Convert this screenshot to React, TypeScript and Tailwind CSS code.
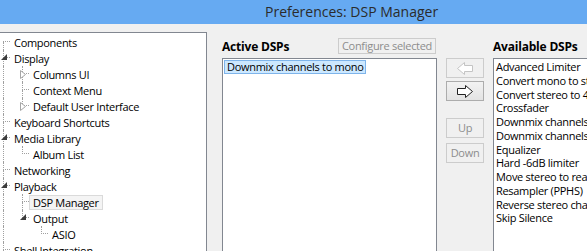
import type { ReactNode } from 'react'

type Node = {
  label: string
  children?: Node[]
  open?: boolean
  selected?: boolean
}

const TREE: Node[] = [
  { label: 'Components' },
  {
    label: 'Display',
    open: true,
    children: [
      { label: 'Columns UI', children: [], open: false },
      { label: 'Context Menu' },
      { label: 'Default User Interface', children: [], open: false },
    ],
  },
  { label: 'Keyboard Shortcuts' },
  { label: 'Media Library', open: true, children: [{ label: 'Album List' }] },
  { label: 'Networking' },
  {
    label: 'Playback',
    open: true,
    children: [
      { label: 'DSP Manager', selected: true },
      { label: 'Output', open: true, children: [{ label: 'ASIO' }] },
    ],
  },
  { label: 'Shell Integration' },
  { label: 'Tools' },
]

const AVAILABLE = [
  'Advanced Limiter',
  'Convert mono to stereo',
  'Convert stereo to 4 channels',
  'Crossfader',
  'Downmix channels to mono',
  'Downmix channels to stereo',
  'Equalizer',
  'Hard -6dB limiter',
  'Move stereo to rear channels',
  'Resampler (PPHS)',
  'Reverse stereo channels',
  'Skip Silence',
]

function Expander({ open }: { open: boolean }) {
  if (open) {
    return (
      <svg className="absolute left-[1px] top-[4px]" width="6" height="6" viewBox="0 0 6 6">
        <polygon points="6,0 6,6 0,6" fill="#3c3c3c" />
      </svg>
    )
  }
  return (
    <svg className="absolute left-[1px] top-[4px]" width="6" height="9" viewBox="0 0 6 9">
      <polygon points="0.5,0.5 5.5,4.5 0.5,8.5" fill="#fff" stroke="#a6a6a6" strokeWidth="1" />
    </svg>
  )
}

function TreeRow({ node, guides, isFirst, isLast }: { node: Node; guides: boolean[]; isFirst: boolean; isLast: boolean }) {
  return (
    <div className="flex h-[16px] items-center">
      {guides.map((g, i) => (
        <div key={i} className="h-full w-[19px] shrink-0">
          <div className={g ? 'ml-[3px] h-full border-l border-dotted border-[#a0a0a0]' : 'ml-[3px] h-full'} />
        </div>
      ))}
      <div className="relative flex h-full w-[10px] shrink-0 flex-col">
        <div
          className={
            isFirst
              ? 'ml-[3px] h-[8px] w-[7px] border-b border-dotted border-[#a0a0a0]'
              : 'ml-[3px] h-[8px] w-[7px] border-b border-l border-dotted border-[#a0a0a0]'
          }
        />
        <div className={isLast ? 'ml-[3px] h-[8px]' : 'ml-[3px] h-[8px] border-l border-dotted border-[#a0a0a0]'} />
        {node.children && <Expander open={!!node.open} />}
      </div>
      <span
        className={
          node.selected
            ? 'h-[15px] whitespace-nowrap border border-[#dadada] bg-[#f4f4f4] px-[3px] leading-[13px]'
            : 'h-[15px] whitespace-nowrap border border-transparent px-[3px] leading-[13px]'
        }
      >
        {node.label}
      </span>
    </div>
  )
}

function renderTree(nodes: Node[], guides: boolean[], root: boolean): ReactNode[] {
  const rows: ReactNode[] = []
  nodes.forEach((node, i) => {
    const isLast = i === nodes.length - 1
    rows.push(
      <TreeRow key={guides.length + node.label} node={node} guides={guides} isFirst={root && i === 0} isLast={isLast} />
    )
    if (node.children && node.open) {
      rows.push(...renderTree(node.children, [...guides, !isLast], false))
    }
  })
  return rows
}

function Button({ children, disabled, className }: { children: ReactNode; disabled?: boolean; className: string }) {
  return (
    <div
      className={
        disabled
          ? `flex items-center justify-center whitespace-nowrap border border-[#cccccc] bg-[#f0f0f0] text-[#8d8d8d] ${className}`
          : `flex items-center justify-center whitespace-nowrap border border-[#acacac] bg-[linear-gradient(#f2f2f2,#e3e3e3)] text-black ${className}`
      }
    >
      {children}
    </div>
  )
}

function Arrow({ dir, color }: { dir: 'left' | 'right'; color: string }) {
  const pts = dir === 'right' ? '0.5,3.5 8.5,3.5 8.5,0.5 15.5,6.5 8.5,12.5 8.5,9.5 0.5,9.5' : '15.5,3.5 7.5,3.5 7.5,0.5 0.5,6.5 7.5,12.5 7.5,9.5 15.5,9.5'
  return (
    <svg width="16" height="13" viewBox="0 0 16 13">
      <polygon points={pts} fill="#fff" stroke={color} strokeWidth="1" />
    </svg>
  )
}

export default function App() {
  return (
    <div className="flex h-[251px] w-[587px] flex-col overflow-hidden bg-[#f0f0f0] font-['Open_Sans',sans-serif] text-[11px] tracking-[-0.3px] text-black">
      <div className="h-[24px] shrink-0 bg-[#66aaf2] pl-[265px] text-[14px] leading-[24px] tracking-normal text-[#2b2b2b]">
        Preferences: DSP Manager
      </div>

      <div className="flex min-h-0 flex-1">
        <div className="mt-[8px] w-[207px] shrink-0 border-r border-t border-[#828790] bg-white pt-[1px]">
          {renderTree(TREE, [], true)}
        </div>

        <div className="ml-[15px] flex w-[215px] shrink-0 flex-col">
          <div className="flex h-[34px] shrink-0 items-start justify-between">
            <span className="mt-[15px] text-[12px] font-bold leading-[16px] tracking-[-0.2px]">Active DSPs</span>
            <Button disabled className="mr-[1px] mt-[14px] h-[16px] w-[98px] leading-[14px]">
              Configure selected
            </Button>
          </div>
          <div className="flex-1 border border-b-0 border-[#828790] bg-white p-[1px]">
            <div className="h-[14px] w-[142px] whitespace-nowrap border border-[#7eb4ea] bg-[#cce8ff] px-[2px] leading-[12px]">
              Downmix channels to mono
            </div>
          </div>
        </div>

        <div className="ml-[9px] flex w-[38px] shrink-0 flex-col pt-[34px]">
          <Button disabled className="h-[20px] w-[38px]">
            <Arrow dir="left" color="#c4c4c4" />
          </Button>
          <Button className="mt-[3px] h-[20px] w-[38px]">
            <Arrow dir="right" color="#222" />
          </Button>
          <Button disabled className="mt-[17px] h-[20px] w-[38px]">
            Up
          </Button>
          <Button disabled className="mt-[5px] h-[20px] w-[38px]">
            Down
          </Button>
        </div>

        <div className="ml-[9px] flex min-w-0 flex-1 flex-col">
          <div className="flex h-[34px] shrink-0 items-start">
            <span className="mt-[15px] whitespace-nowrap text-[12px] font-bold leading-[16px] tracking-[-0.2px]">Available DSPs</span>
          </div>
          <div className="flex-1 border border-b-0 border-r-0 border-[#828790] bg-white pl-[2px] pt-[1px]">
            {AVAILABLE.map((name) => (
              <div key={name} className="h-[13.75px] whitespace-nowrap leading-[13.75px]">
                {name}
              </div>
            ))}
          </div>
        </div>
      </div>
    </div>
  )
}
